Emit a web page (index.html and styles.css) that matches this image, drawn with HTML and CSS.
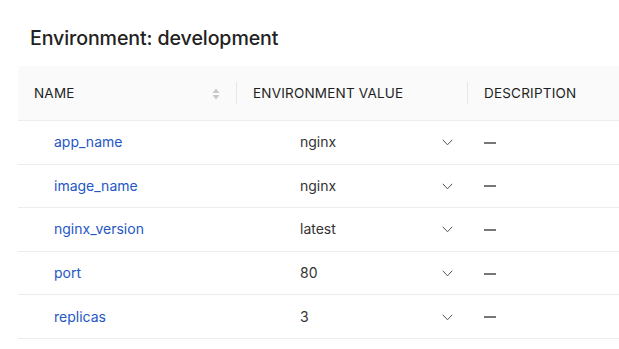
FILE: index.html
```html
<!DOCTYPE html>
<html>
<head>
<meta charset="utf-8">
<link rel="stylesheet" href="styles.css">
</head>
<body>
<div class="page">
  <h1 class="title">Environment: development</h1>
  <div class="table">
    <div class="row head">
      <div class="cell c1">NAME
        <svg class="sort" width="8" height="12" viewBox="0 0 8 12"><path d="M4 0.5L7.5 5H0.5Z" fill="#c8c8c8"/><path d="M4 11.5L7.5 7H0.5Z" fill="#c8c8c8"/></svg>
      </div>
      <div class="cell c2">ENVIRONMENT VALUE</div>
      <div class="cell c3">DESCRIPTION</div>
    </div>
    <div class="row">
      <div class="cell c1"><a class="link">app_name</a></div>
      <div class="cell c2"><span class="val">nginx</span><svg class="chev" width="11" height="7" viewBox="0 0 11 7"><path d="M0.8 0.8L5.5 5.8L10.2 0.8" fill="none" stroke="#555" stroke-width="1"/></svg></div>
      <div class="cell c3"><span class="dash"></span></div>
    </div>
    <div class="row">
      <div class="cell c1"><a class="link">image_name</a></div>
      <div class="cell c2"><span class="val">nginx</span><svg class="chev" width="11" height="7" viewBox="0 0 11 7"><path d="M0.8 0.8L5.5 5.8L10.2 0.8" fill="none" stroke="#555" stroke-width="1"/></svg></div>
      <div class="cell c3"><span class="dash"></span></div>
    </div>
    <div class="row">
      <div class="cell c1"><a class="link">nginx_version</a></div>
      <div class="cell c2"><span class="val">latest</span><svg class="chev" width="11" height="7" viewBox="0 0 11 7"><path d="M0.8 0.8L5.5 5.8L10.2 0.8" fill="none" stroke="#555" stroke-width="1"/></svg></div>
      <div class="cell c3"><span class="dash"></span></div>
    </div>
    <div class="row">
      <div class="cell c1"><a class="link">port</a></div>
      <div class="cell c2"><span class="val">80</span><svg class="chev" width="11" height="7" viewBox="0 0 11 7"><path d="M0.8 0.8L5.5 5.8L10.2 0.8" fill="none" stroke="#555" stroke-width="1"/></svg></div>
      <div class="cell c3"><span class="dash"></span></div>
    </div>
    <div class="row">
      <div class="cell c1"><a class="link">replicas</a></div>
      <div class="cell c2"><span class="val">3</span><svg class="chev" width="11" height="7" viewBox="0 0 11 7"><path d="M0.8 0.8L5.5 5.8L10.2 0.8" fill="none" stroke="#555" stroke-width="1"/></svg></div>
      <div class="cell c3"><span class="dash"></span></div>
    </div>
  </div>
</div>
</body>
</html>
```
FILE: styles.css
```css
* { box-sizing: border-box; }
html, body { margin: 0; padding: 0; background: #fff; }
body { font-family: Inter, "Noto Sans", sans-serif; color: #222; }
.page { padding: 24px 0 0 18px; }
.title { margin: 0 0 14px 12px; font-size: 19.6px; font-weight: 500; line-height: 28px; color: #222; letter-spacing: -0.1px; }
.table { width: 601px; }
.row { display: grid; grid-template-columns: 218px 231px 152px; height: 43.6px; border-bottom: 1px solid #ececec; align-items: center; }
.row.head { height: 55px; background: #fafafa; border-bottom: 1px solid #ececec; }
.cell { font-size: 14px; line-height: 20px; display: flex; align-items: center; position: relative; height: 100%; }
.head .cell { font-size: 13.5px; font-weight: 400; color: #1f1f1f; letter-spacing: 0.2px; }
.head .c1 { padding-left: 16px; justify-content: space-between; padding-right: 16px; }
.head .c2, .head .c3 { padding-left: 17px; }
.head .c2::before, .head .c3::before { content: ""; position: absolute; left: 0; top: 16px; bottom: 16px; width: 1px; background: #e6e6e6; }
.sort { margin-top: 1px; }
.c1 { padding-left: 36px; }
.link { color: #2457c5; text-decoration: none; }
.c2 { padding-left: 64px; }
.val { width: 142px; color: #333; }
.chev { margin-top: 1px; }
.c3 { padding-left: 17px; }
.dash { display: block; width: 12px; height: 2px; background: #777; margin-top: 1px; }
```
